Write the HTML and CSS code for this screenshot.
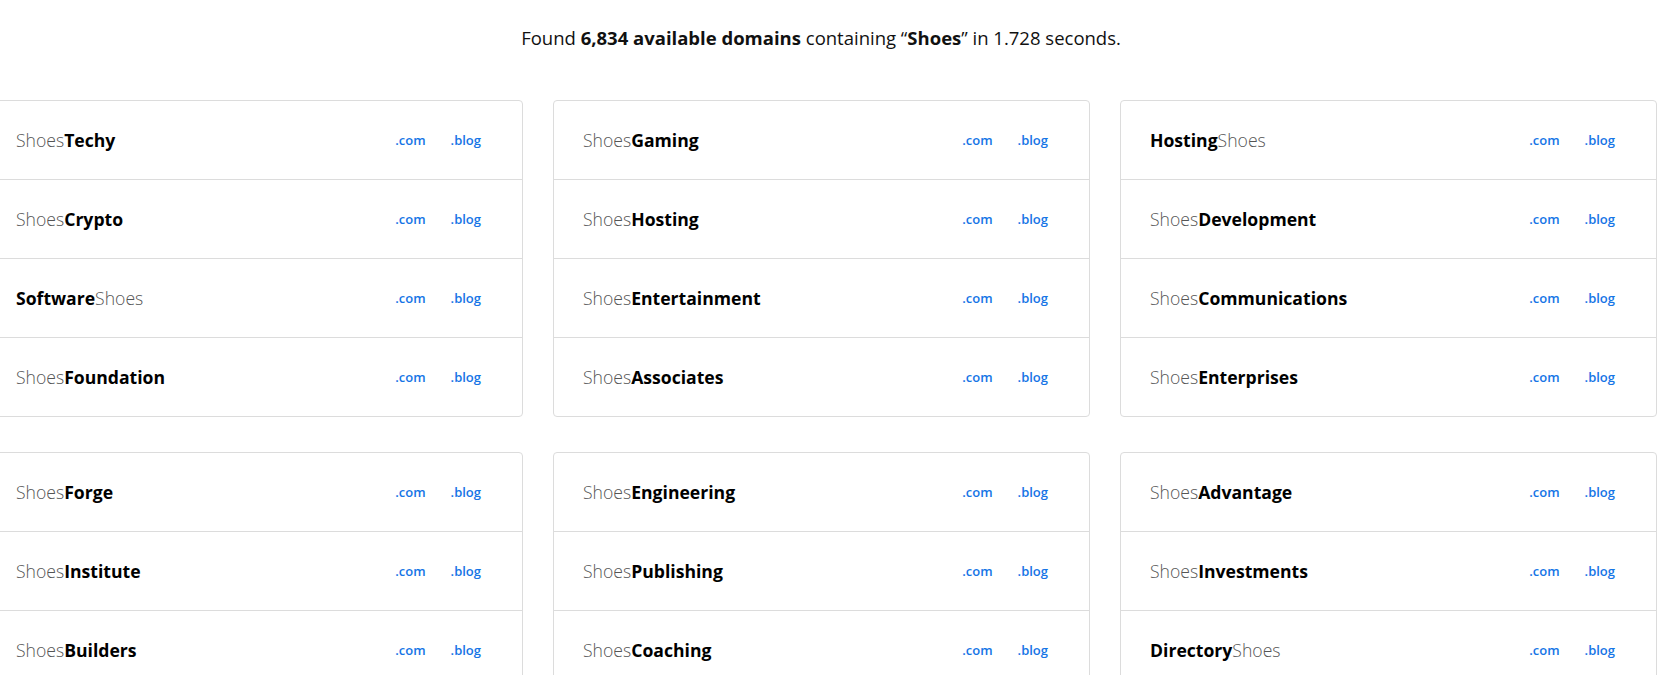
FILE: index.html
```html
<!DOCTYPE html>
<html lang="en">
<head>
<meta charset="utf-8">
<title>Domain results</title>
<link rel="stylesheet" href="styles.css">
</head>
<body>
<div class="page">
  <p class="summary">Found <b>6,834 available domains</b> containing “<b>Shoes</b>” in 1.728 seconds.</p>
  <div class="grid">
    <div class="card">
      <div class="row"><span class="name"><span class="lt">Shoes</span><b>Techy</b></span><span class="tlds"><a>.com</a><a>.blog</a></span></div>
      <div class="row"><span class="name"><span class="lt">Shoes</span><b>Crypto</b></span><span class="tlds"><a>.com</a><a>.blog</a></span></div>
      <div class="row"><span class="name"><b>Software</b><span class="lt">Shoes</span></span><span class="tlds"><a>.com</a><a>.blog</a></span></div>
      <div class="row"><span class="name"><span class="lt">Shoes</span><b>Foundation</b></span><span class="tlds"><a>.com</a><a>.blog</a></span></div>
    </div>
    <div class="card">
      <div class="row"><span class="name"><span class="lt">Shoes</span><b>Gaming</b></span><span class="tlds"><a>.com</a><a>.blog</a></span></div>
      <div class="row"><span class="name"><span class="lt">Shoes</span><b>Hosting</b></span><span class="tlds"><a>.com</a><a>.blog</a></span></div>
      <div class="row"><span class="name"><span class="lt">Shoes</span><b>Entertainment</b></span><span class="tlds"><a>.com</a><a>.blog</a></span></div>
      <div class="row"><span class="name"><span class="lt">Shoes</span><b>Associates</b></span><span class="tlds"><a>.com</a><a>.blog</a></span></div>
    </div>
    <div class="card">
      <div class="row"><span class="name"><b>Hosting</b><span class="lt">Shoes</span></span><span class="tlds"><a>.com</a><a>.blog</a></span></div>
      <div class="row"><span class="name"><span class="lt">Shoes</span><b>Development</b></span><span class="tlds"><a>.com</a><a>.blog</a></span></div>
      <div class="row"><span class="name"><span class="lt">Shoes</span><b>Communications</b></span><span class="tlds"><a>.com</a><a>.blog</a></span></div>
      <div class="row"><span class="name"><span class="lt">Shoes</span><b>Enterprises</b></span><span class="tlds"><a>.com</a><a>.blog</a></span></div>
    </div>
    <div class="card">
      <div class="row"><span class="name"><span class="lt">Shoes</span><b>Forge</b></span><span class="tlds"><a>.com</a><a>.blog</a></span></div>
      <div class="row"><span class="name"><span class="lt">Shoes</span><b>Institute</b></span><span class="tlds"><a>.com</a><a>.blog</a></span></div>
      <div class="row"><span class="name"><span class="lt">Shoes</span><b>Builders</b></span><span class="tlds"><a>.com</a><a>.blog</a></span></div>
    </div>
    <div class="card">
      <div class="row"><span class="name"><span class="lt">Shoes</span><b>Engineering</b></span><span class="tlds"><a>.com</a><a>.blog</a></span></div>
      <div class="row"><span class="name"><span class="lt">Shoes</span><b>Publishing</b></span><span class="tlds"><a>.com</a><a>.blog</a></span></div>
      <div class="row"><span class="name"><span class="lt">Shoes</span><b>Coaching</b></span><span class="tlds"><a>.com</a><a>.blog</a></span></div>
    </div>
    <div class="card">
      <div class="row"><span class="name"><span class="lt">Shoes</span><b>Advantage</b></span><span class="tlds"><a>.com</a><a>.blog</a></span></div>
      <div class="row"><span class="name"><span class="lt">Shoes</span><b>Investments</b></span><span class="tlds"><a>.com</a><a>.blog</a></span></div>
      <div class="row"><span class="name"><b>Directory</b><span class="lt">Shoes</span></span><span class="tlds"><a>.com</a><a>.blog</a></span></div>
    </div>
  </div>
</div>
</body>
</html>
```

FILE: styles.css
```css
html, body {
  margin: 0;
  padding: 0;
  background: #fff;
  overflow: hidden;
}
body {
  font-family: "Open Sans", "Noto Sans", "Liberation Sans", sans-serif;
  color: #111;
}
.page {
  width: 1642px;
}
.summary {
  margin: 0;
  padding-top: 25px;
  height: 100px;
  box-sizing: border-box;
  text-align: center;
  font-size: 18.5px;
  line-height: 26px;
  color: #111;
}
.summary b {
  font-weight: 700;
}
.grid {
  display: grid;
  grid-template-columns: repeat(3, 537px);
  column-gap: 30px;
  row-gap: 35px;
  margin-left: -14px;
  width: 1671px;
}
.card {
  border: 1px solid #dcdcdc;
  border-radius: 4px;
  background: #fff;
}
.row {
  display: flex;
  align-items: center;
  justify-content: space-between;
  height: 78px;
  padding: 0 41px 0 29px;
  border-bottom: 1px solid #dcdcdc;
}
.row:last-child {
  border-bottom: none;
}
.name {
  font-size: 17.6px;
  color: #000;
}
.name b {
  font-weight: 700;
}
.name .lt {
  font-weight: 300;
  color: #555;
}
.tlds {
  display: flex;
  gap: 25px;
}
.tlds a {
  font-size: 13px;
  font-weight: 600;
  color: #1675e6;
  text-decoration: none;
}
```
